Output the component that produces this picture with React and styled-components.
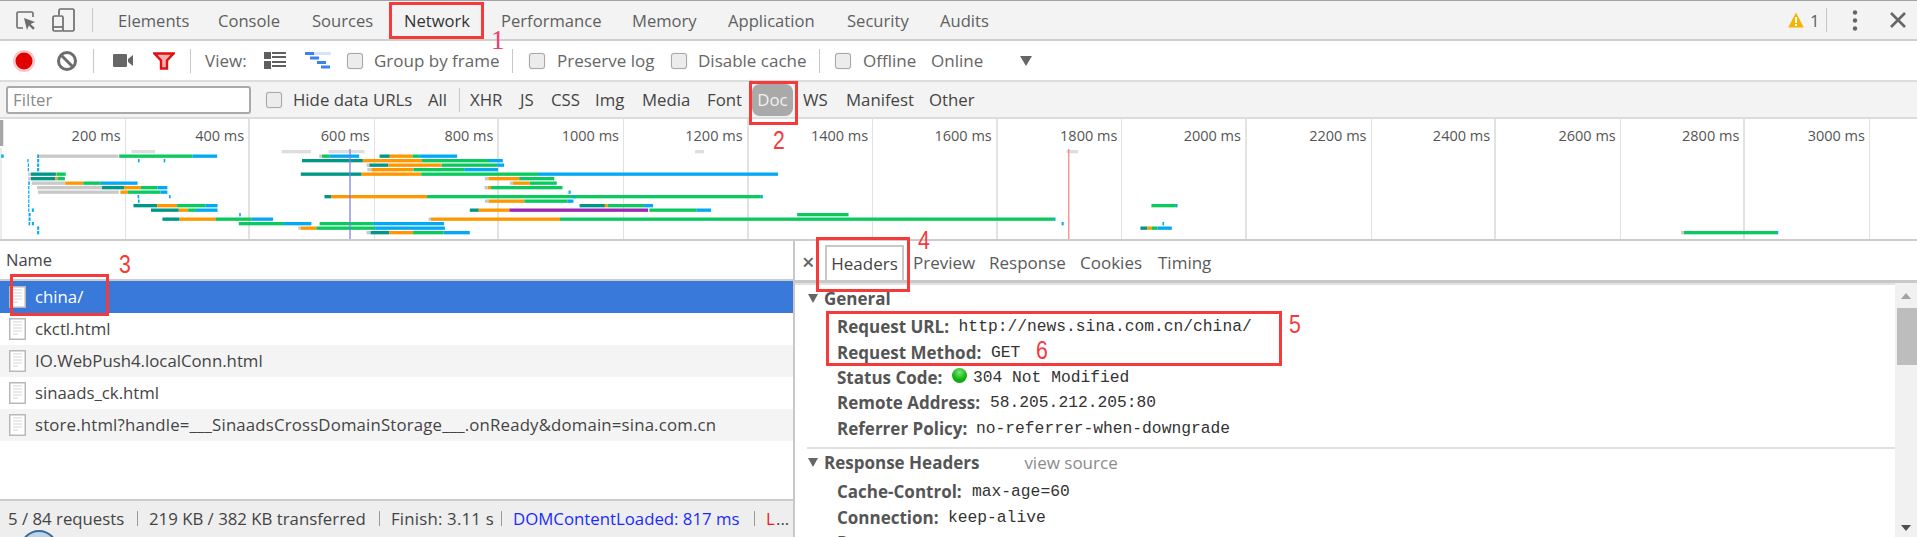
import React from 'react';
import styled, { createGlobalStyle } from 'styled-components';

const GlobalStyle = createGlobalStyle`
  html, body { margin: 0; padding: 0; background: #fff; }
  * { box-sizing: border-box; }
`;

const UI_FONT = `"Open Sans", "Noto Sans", sans-serif`;
const MONO_FONT = `"Liberation Mono", monospace`;

const Page = styled.div`
  position: relative;
  width: 1917px;
  height: 537px;
  overflow: hidden;
  display: flex;
  flex-direction: column;
  border-top: 1px solid #a3a3a3;
  font-family: ${UI_FONT};
  font-size: 17px;
  color: #5a5a5a;
`;

const Bar = styled.div`
  flex: none;
  display: flex;
  align-items: center;
  height: ${(p) => p.$h}px;
  padding-left: ${(p) => p.$pad || 0}px;
  font-size: ${(p) => p.$size || 17}px;
  color: ${(p) => p.$color || '#5f5f5f'};
  background: ${(p) => p.$bg || '#f3f3f3'};
  border-bottom: 2px solid ${(p) => p.$lineColor || '#dcdcdc'};
  white-space: nowrap;
`;

// every toolbar item gets the width up to the next item
const Slot = styled.div`
  flex: none;
  display: flex;
  align-items: center;
  width: ${(p) => p.$w}px;
  padding-left: ${(p) => p.$pad || 0}px;
  letter-spacing: ${(p) => p.$track || 0}px;
  color: ${(p) => p.$color || 'inherit'};
`;

const Spring = styled.div`
  flex: 1;
`;

const Divider = styled.div`
  flex: none;
  width: 1px;
  height: ${(p) => p.$h || 24}px;
  margin-right: ${(p) => p.$after || 0}px;
  background: #c8c8c8;
`;

const Check = styled.span`
  flex: none;
  width: 16px;
  height: 16px;
  border: 1px solid #a8a8a8;
  border-radius: 3px;
  background: #ececec;
  box-shadow: 0 0 1px #bbb;
  margin-right: ${(p) => p.$after}px;
`;

const FilterInput = styled.div`
  flex: none;
  width: 245px;
  height: 28px;
  margin-right: 15px;
  padding-left: 5px;
  border: 2px solid #a9a9a9;
  border-radius: 3px;
  background: #fff;
  color: #8a8a8a;
  line-height: 24px;
`;

const Pill = styled.div`
  flex: none;
  width: 41px;
  height: 32px;
  margin: 0 10px 0 -4px;
  border-radius: 8px;
  background: #a9a9a9;
  color: #f0f0f0;
  text-align: center;
  line-height: 32px;
`;

const Timeline = styled.div`
  position: relative;
  flex: none;
  display: flex;
  height: 122px;
  padding-left: 1px;
  border-bottom: 2px solid #cbcbcb;
`;

const Tick = styled.div`
  flex: none;
  width: 124.6px;
  height: 100%;
  padding: 6px 4px 0 0;
  border-right: ${(p) => (p.$thin ? 1 : 2)}px solid #e2e2e2;
  text-align: right;
  font-size: 14.5px;
  line-height: 22px;
  color: #555;
`;

const Waterfall = styled.svg`
  position: absolute;
  left: 0;
  top: 0;
  width: 1917px;
  height: 120px;
`;

const Split = styled.div`
  flex: 1;
  min-height: 0;
  display: flex;
`;

const ListPane = styled.div`
  flex: none;
  width: 795px;
  display: flex;
  flex-direction: column;
  border-right: 2px solid #c8c8c8;
`;

const NameHead = styled.div`
  flex: none;
  height: 40px;
  padding: 7px 0 0 6px;
  line-height: 24px;
  font-size: 16.5px;
  color: #444;
  border-bottom: 2px solid #cbcbcb;
`;

const Row = styled.div`
  flex: none;
  display: flex;
  align-items: center;
  height: 32px;
  padding-left: 9px;
  gap: 9px;
  font-size: 16.8px;
  letter-spacing: ${(p) => p.$track || 0}px;
  white-space: nowrap;
  color: ${(p) => (p.$selected ? '#fff' : '#444')};
  background: ${(p) => (p.$selected ? '#3879d9' : p.$odd ? '#f4f4f4' : '#fff')};
`;

const RowText = styled.span`
  margin-top: -2px;
`;

const StatusBar = styled.div`
  margin-top: auto;
  flex: none;
  display: flex;
  align-items: center;
  height: 38px;
  padding-left: 8px;
  padding-bottom: 2px;
  font-size: 16.8px;
  background: #eee;
  border-top: 2px solid #cbcbcb;
  white-space: nowrap;
  color: #444;
`;

const StatusSep = styled.span`
  flex: none;
  width: 1px;
  height: 15px;
  margin-right: 11px;
  background: #999;
`;

const DetailPane = styled.div`
  flex: 1;
  min-width: 0;
  display: flex;
  flex-direction: column;
`;

const DetailTabs = styled.div`
  flex: none;
  display: flex;
  align-items: center;
  height: 42px;
  border-bottom: 3px solid #c8c8c8;
  white-space: nowrap;
`;

const CloseX = styled.span`
  flex: none;
  width: 30px;
  padding-left: 7px;
  font-size: 22px;
  line-height: 24px;
  font-weight: 600;
  color: #666;
`;

const DetailTab = styled.div`
  flex: none;
  display: flex;
  align-items: center;
  width: ${(p) => p.$w}px;
  height: 35px;
  margin-top: 4px;
  ${(p) => p.$active && `
    justify-content: center;
    margin-right: 9px;
    border: 2px solid #c8c8c8;
    border-bottom: none;
    color: #444;
  `}
`;

const DetailBody = styled.div`
  flex: 1;
  min-height: 0;
  display: flex;
`;

const Sections = styled.div`
  flex: 1;
  overflow: hidden;
  border-top: 2px solid #e2e2e2;
`;

const SectionHead = styled.div`
  display: flex;
  align-items: center;
  height: 26px;
  padding-left: 13px;
  margin-bottom: ${(p) => p.$after}px;
  font-weight: 700;
  color: #555;
`;

const Arrow = styled.span`
  flex: none;
  width: 0;
  height: 0;
  margin-right: 6px;
  border-left: 5px solid transparent;
  border-right: 5px solid transparent;
  border-top: 9px solid #666;
`;

const ViewSource = styled.span`
  margin-left: 45px;
  font-weight: 400;
  color: #8b8b8b;
`;

const SectionRows = styled.div`
  padding-left: 42px;
  margin-bottom: ${(p) => p.$after || 0}px;
`;

const KV = styled.div`
  display: flex;
  align-items: center;
  height: 25.4px;
  white-space: nowrap;
`;

const Key = styled.span`
  flex: none;
  width: ${(p) => p.$w}px;
  font-weight: 700;
  color: #555;
`;

const Value = styled.span`
  font-family: ${MONO_FONT};
  font-size: 16.3px;
  color: #333;
`;

const GreenDot = styled.span`
  flex: none;
  width: 15px;
  height: 15px;
  margin: -4px 6px 0 0;
  border-radius: 50%;
  background: radial-gradient(circle at 50% 30%, #7be87b, #12b312 55%, #0c9a0c);
`;

const SectionLine = styled.div`
  height: 2px;
  margin: 0 0 1px 12px;
  background: #e0e0e0;
`;

const Scroller = styled.div`
  flex: none;
  width: 22px;
  position: relative;
  background: #f1f1f1;
`;

const ScrollArrow = styled.span`
  position: absolute;
  left: 6px;
  top: ${(p) => p.$top}px;
  width: 0;
  height: 0;
  border-left: 5.5px solid transparent;
  border-right: 5.5px solid transparent;
  ${(p) => (p.$down ? 'border-top: 6px solid #505050;' : 'border-bottom: 6px solid #a3a3a3;')}
`;

const ScrollThumb = styled.div`
  position: absolute;
  left: 2px;
  right: 0;
  top: 25px;
  height: 57px;
  background: #bdbdbd;
`;

const RedBox = styled.div`
  position: absolute;
  left: ${(p) => p.$x}px;
  top: ${(p) => p.$y}px;
  width: ${(p) => p.$w}px;
  height: ${(p) => p.$h}px;
  border: 3px solid #f63a3a;
  pointer-events: none;
`;

const Mark = styled.span`
  position: absolute;
  left: ${(p) => p.$x}px;
  top: ${(p) => p.$y}px;
  font-family: "Liberation Sans", sans-serif;
  font-size: 25px;
  line-height: 25px;
  color: #f63a3a;
  transform: scaleX(0.85);
  transform-origin: left center;
`;

const SerifMark = styled.span`
  position: absolute;
  left: 491px;
  top: 26px;
  font-family: "Liberation Serif", serif;
  font-size: 27px;
  line-height: 27px;
  color: #f0406e;
`;

const Blob = styled.div`
  position: absolute;
  left: 20px;
  top: 529px;
  width: 38px;
  height: 38px;
  border-radius: 50%;
  border: 2px solid #3c6a94;
  background: #bcd4ea;
`;

const InspectIcon = () => (
  <svg width="24" height="24" viewBox="0 0 24 24" fill="none" style={{ marginLeft: 14 }}>
    <path d="M9 20H4.5a1.5 1.5 0 0 1-1.5-1.5V5.5A1.5 1.5 0 0 1 4.5 4h13A1.5 1.5 0 0 1 19 5.5V9" stroke="#6d6d6d" strokeWidth="1.6" />
    <path d="M10 10l11 4-4.4 1.9 4.2 4.2-1.7 1.7-4.2-4.2L13 22z" fill="#6d6d6d" />
  </svg>
);

const DeviceIcon = () => (
  <svg width="26" height="26" viewBox="0 0 26 26" fill="none" stroke="#6d6d6d" strokeWidth="1.7">
    <path d="M8 8V3.5A1.5 1.5 0 0 1 9.5 2h12A1.5 1.5 0 0 1 23 3.5v19a1.5 1.5 0 0 1-1.5 1.5H12" />
    <path d="M3.5 9h7A1.5 1.5 0 0 1 12 10.5v12a1.5 1.5 0 0 1-1.5 1.5h-7A1.5 1.5 0 0 1 2 22.5v-12A1.5 1.5 0 0 1 3.5 9z" />
    <path d="M2 20h10" />
  </svg>
);

const RecordIcon = () => (
  <svg width="24" height="24" viewBox="0 0 24 24">
    <circle cx="12" cy="12" r="11" fill="#f9c9c9" />
    <circle cx="12" cy="12" r="8.5" fill="#e00000" />
  </svg>
);

const StopIcon = () => (
  <svg width="22" height="22" viewBox="0 0 22 22" fill="none" stroke="#6d6d6d" strokeWidth="3">
    <circle cx="11" cy="11" r="8.5" />
    <path d="M5 5l12 12" />
  </svg>
);

const CameraIcon = () => (
  <svg width="20" height="13" viewBox="0 0 20 13" fill="#666">
    <rect x="0" y="0" width="14" height="13" rx="1" />
    <path d="M15 5l5-4v11l-5-4z" />
  </svg>
);

const FunnelIcon = () => (
  <svg width="22" height="18" viewBox="0 0 22 18">
    <path d="M1.5 1.5h19L14 8.5V16.5H8V8.5z" fill="#f2b0b0" stroke="#e01010" strokeWidth="2.4" />
  </svg>
);

const ListIcon = () => (
  <svg width="22" height="17" viewBox="0 0 22 17" fill="#5f5f5f">
    <rect x="0" y="0" width="7" height="7" />
    <rect x="0" y="9" width="7" height="8" />
    <rect x="8" y="0" width="14" height="2" />
    <rect x="8" y="4" width="14" height="2" />
    <rect x="8" y="9" width="14" height="2" />
    <rect x="8" y="13" width="14" height="2" />
  </svg>
);

const GanttIcon = () => (
  <svg width="26" height="17" viewBox="0 0 26 17">
    <rect x="0" y="0" width="26" height="3" fill="#d5e4fb" />
    <rect x="0" y="0" width="9" height="3" fill="#3b82ee" />
    <rect x="5" y="4.5" width="9" height="3" fill="#3b82ee" />
    <rect x="12" y="9" width="9" height="3" fill="#3b82ee" />
    <rect x="16" y="13.5" width="9" height="3" fill="#3b82ee" />
  </svg>
);

const FileIcon = () => (
  <svg width="17" height="22" viewBox="0 0 17 22" style={{ flex: 'none' }}>
    <rect x="0.75" y="0.75" width="15.5" height="20.5" fill="#fff" stroke="#b8b8b8" strokeWidth="1.5" />
    <path d="M4 4h9M4 7h9M4 10h9M4 13h9M4 16h5" stroke="#e4e4e4" strokeWidth="1.5" />
  </svg>
);

const WarnIcon = () => (
  <svg width="16" height="16" viewBox="0 0 16 16">
    <path d="M8 0.5L15.8 15.5H0.2z" fill="#f4b400" />
    <rect x="7" y="5" width="2" height="6" fill="#fff" />
    <rect x="7" y="12" width="2" height="2" fill="#fff" />
  </svg>
);

const DotsIcon = () => (
  <svg width="6" height="21" viewBox="0 0 6 21" fill="#666">
    <circle cx="3" cy="2.5" r="2.2" />
    <circle cx="3" cy="10.5" r="2.2" />
    <circle cx="3" cy="18.5" r="2.2" />
  </svg>
);

const CloseIcon = () => (
  <svg width="16" height="16" viewBox="0 0 16 16" stroke="#666" strokeWidth="2.6">
    <path d="M1 1l14 14M15 1L1 15" />
  </svg>
);

const DropIcon = () => (
  <svg width="12" height="10" viewBox="0 0 12 10" fill="#666">
    <path d="M0 0h12L6 10z" />
  </svg>
);

const tabs = [
  ['Elements', 100], ['Console', 94], ['Sources', 92], ['Network', 97, '#333'], ['Performance', 131],
  ['Memory', 96], ['Application', 119], ['Security', 93], ['Audits', 60],
];

const typeFilters = [
  ['XHR', 50], ['JS', 31], ['CSS', 44], ['Img', 47], ['Media', 65], ['Font', 49],
];

const ticks = [200, 400, 600, 800, 1000, 1200, 1400, 1600, 1800, 2000, 2200, 2400, 2600, 2800, 3000];

const T = '#009688';
const O = '#ff9800';
const G = '#0ac95f';
const B = '#03a9f4';
const L = '#c9c9c9';
const P = '#9c27b0';
const Z = 1568; // second crop offset, bars are noted in 2.45 units per pixel
const Y = 3128.65;

// row index, then [from, to, colour] runs
const bars = [
  [0, [[322, 380, '#ddd'], [690, 762, '#ddd'], [805, 893, '#ddd'], [Z + 135, Z + 157, '#ddd'], [Z + 1045, Z + 1073, '#ddd']]],
  [1, [[3, 9, B], [91, 96, B], [96, 290, L], [292, 472, G], [472, 532, B], [782, 789, L], [789, 808, G], [808, 880, B], [930, 955, T], [955, 1011, O], [1011, 1027, G], [1027, 1120, B]]],
  [2, [[67, 70, B], [91, 96, B], [338, 342, B], [401, 405, B], [740, 889, T], [889, 1034, O], [1034, 1198, G], [1198, 1232, B]]],
  [3, [[68, 71, B], [91, 96, B], [898, 905, L], [905, 951, T], [951, 1082, O], [1082, 1218, G], [1218, 1235, B]]],
  [4, [[68, 71, B], [91, 96, B], [900, 910, L], [910, 1013, O], [1013, 1139, G], [1139, 1220, B]]],
  [5, [[69, 76, L], [76, 137, T], [137, 139, O], [139, 161, G], [737, 886, T], [886, 1032, O], [1032, 1318, G], [1318, Z + 338, B]]],
  [6, [[69, 76, L], [76, 136, T], [136, 141, O], [141, 159, G], [1188, 1197, L], [1197, 1272, O], [1272, 1358, G]]],
  [7, [[69, 73, B], [78, 160, L], [160, 204, O], [204, 247, G], [247, 337, B], [1249, 1257, L], [1257, 1298, O], [1298, 1364, G]]],
  [8, [[69, 72, B], [91, 250, L], [250, 304, T], [304, 345, O], [345, 386, G], [386, 410, B], [1187, 1195, L], [1195, 1203, O], [1203, 1378, G]]],
  [9, [[69, 72, B], [93, 291, L], [295, 313, O], [313, 393, G], [393, 410, B], [1393, 1398, B]]],
  [10, [[69, 72, B], [337, 341, B], [414, 418, B], [795, 811, T], [811, 1046, O], [1046, Z + 296, G], [Z + 296, Z + 301, B], [1405, 1410, B]]],
  [11, [[69, 72, B], [338, 342, B], [1188, 1197, L], [1197, 1285, O], [1285, 1390, G], [1390, 1405, B]]],
  [12, [[69, 72, B], [327, 385, T], [385, 434, O], [434, 503, G], [503, 533, B], [1420, 1482, T], [1482, 1489, O], [1489, Z + 10, G], [Z + 10, Z + 32, B], [Z + 1253, Z + 1313, G], [Z + 1313, Z + 1317, B]]],
  [13, [[69, 72, B], [78, 83, B], [370, 438, T], [438, 461, O], [461, 480, G], [480, 533, B], [1151, 1173, T], [1173, 1248, O], [1248, Z + 20, P], [Z + 23, Z + 139, G], [Z + 139, Z + 174, B]]],
  [14, [[70, 75, B], [586, 590, B], [Z + 385, Z + 511, G]]],
  [15, [[70, 75, B], [398, 440, T], [440, 529, O], [529, 617, G], [617, 669, B], [1050, 1056, L], [1056, 1372, O], [1372, Z + 1014, G], [Z + 1014, Z + 1018, B]]],
  [16, [[70, 74, B], [78, 83, B], [585, 696, G], [696, 763, B], [783, 914, G], [914, 1088, B], [Z + 1033, Z + 1038, B], [Z + 1280, Z + 1284, B]]],
  [17, [[91, 96, B], [731, 737, L], [737, 775, O], [775, 919, G], [919, 1090, B], [Z + 1226, Z + 1243, T], [Z + 1243, Z + 1254, O], [Z + 1254, Z + 1268, G], [Z + 1268, Z + 1303, B]]],
  [18, [[91, 96, B], [898, 908, L], [908, 954, T], [954, 1012, O], [1012, 1087, G], [1087, 1151, B], [Y + 990, Y + 997, L], [Y + 997, Y + 1225, G], [Y + 1225, Y + 1228, B]]],
];

const files = [
  ['china/'],
  ['ckctl.html'],
  ['IO.WebPush4.localConn.html'],
  ['sinaads_ck.html'],
  ['store.html?handle=___SinaadsCrossDomainStorage___.onReady&domain=sina.com.cn', 0.17],
];

export default function App() {
  return (
    <>
      <GlobalStyle />
      <Page>
        <Bar $h={40} $size={16.6} $lineColor="#cfcfcf">
          <Slot $w={51}><InspectIcon /></Slot>
          <Slot $w={41}><DeviceIcon /></Slot>
          <Divider $after={25} />
          {tabs.map(([name, w, color]) => <Slot key={name} $w={w} $color={color}>{name}</Slot>)}
          <Spring />
          <WarnIcon />
          <Slot $w={22} $pad={6}>1</Slot>
          <Divider $after={25} />
          <Slot $w={38}><DotsIcon /></Slot>
          <Slot $w={27}><CloseIcon /></Slot>
        </Bar>

        <Bar $h={41} $bg="#fff" $color="#666">
          <Slot $w={56} $pad={12}><RecordIcon /></Slot>
          <Slot $w={37}><StopIcon /></Slot>
          <Divider $after={19} />
          <Slot $w={40}><CameraIcon /></Slot>
          <Slot $w={37}><FunnelIcon /></Slot>
          <Divider $after={14} />
          <Slot $w={59}>View:</Slot>
          <Slot $w={41}><ListIcon /></Slot>
          <Slot $w={42}><GanttIcon /></Slot>
          <Check $after={11} />
          <Slot $w={138}>Group by frame</Slot>
          <Divider $after={16} />
          <Check $after={12} />
          <Slot $w={114}>Preserve log</Slot>
          <Check $after={11} />
          <Slot $w={121}>Disable cache</Slot>
          <Divider $after={15} />
          <Check $after={12} />
          <Slot $w={68}>Offline</Slot>
          <Slot $w={89}>Online</Slot>
          <DropIcon />
        </Bar>

        <Bar $h={37} $pad={6} $size={16.8} $color="#444">
          <FilterInput>Filter</FilterInput>
          <Check $after={11} />
          <Slot $w={135}>Hide data URLs</Slot>
          <Slot $w={31}>All</Slot>
          <Divider $after={10} />
          {typeFilters.map(([name, w]) => <Slot key={name} $w={w}>{name}</Slot>)}
          <Pill>Doc</Pill>
          <Slot $w={43}>WS</Slot>
          <Slot $w={83}>Manifest</Slot>
          <Slot $w={50}>Other</Slot>
        </Bar>

        <Timeline>
          {ticks.map((t) => <Tick key={t} $thin={t % 400 !== 0}>{t} ms</Tick>)}
          <Waterfall viewBox="0 12 4696.65 360" preserveAspectRatio="none">
            <rect x="0" y="15" width="8" height="78" fill="#a6a6a6" />
            <rect x="0" y="99" width="5" height="273" fill="#ececec" />
            {bars.flatMap(([row, runs]) =>
              runs.map(([from, to, color], i) => (
                <rect key={`${row}-${i}`} x={from} y={105 + row * 13.5} width={to - from} height="10" fill={color} />
              ))
            )}
            <rect x="856" y="102" width="3" height="270" fill="#7b7bee" />
            <rect x={Z + 1049} y="102" width="3" height="270" fill="#f58484" />
          </Waterfall>
        </Timeline>

        <Split>
          <ListPane>
            <NameHead>Name</NameHead>
            {files.map(([f, track], i) => (
              <Row key={f} $selected={i === 0} $odd={i % 2 === 0} $track={track}>
                <FileIcon />
                <RowText>{f}</RowText>
              </Row>
            ))}
            <StatusBar>
              <Slot $w={129}>5 / 84 requests</Slot>
              <StatusSep />
              <Slot $w={230}>219 KB / 382 KB transferred</Slot>
              <StatusSep />
              <Slot $w={110} $track={0.2}>Finish: 3.11 s</Slot>
              <StatusSep />
              <Slot $w={241} $color="#1a2bff">DOMContentLoaded: 817 ms</Slot>
              <StatusSep />
              <Slot $w={10} $color="#f01818">L</Slot>
              ...
            </StatusBar>
          </ListPane>

          <DetailPane>
            <DetailTabs>
              <CloseX>×</CloseX>
              <DetailTab $active $w={79}>Headers</DetailTab>
              <DetailTab $w={76}>Preview</DetailTab>
              <DetailTab $w={91}>Response</DetailTab>
              <DetailTab $w={78}>Cookies</DetailTab>
              <DetailTab $w={60}>Timing</DetailTab>
            </DetailTabs>
            <DetailBody>
              <Sections>
                <SectionHead $after={3}><Arrow />General</SectionHead>
                <SectionRows $after={6}>
                  <KV><Key $w={121.6}>Request URL:</Key><Value>http://news.sina.com.cn/china/</Value></KV>
                  <KV><Key $w={154}>Request Method:</Key><Value>GET</Value></KV>
                  <KV><Key $w={115}>Status Code:</Key><GreenDot /><Value>304 Not Modified</Value></KV>
                  <KV><Key $w={153}>Remote Address:</Key><Value>58.205.212.205:80</Value></KV>
                  <KV><Key $w={139}>Referrer Policy:</Key><Value>no-referrer-when-downgrade</Value></KV>
                </SectionRows>
                <SectionLine />
                <SectionHead $after={3}><Arrow />Response Headers<ViewSource>view source</ViewSource></SectionHead>
                <SectionRows>
                  <KV><Key $w={135}>Cache-Control:</Key><Value>max-age=60</Value></KV>
                  <KV><Key $w={111}>Connection:</Key><Value>keep-alive</Value></KV>
                  <KV><Key $w={50}>Date:</Key></KV>
                </SectionRows>
              </Sections>
              <Scroller>
                <ScrollArrow $top={10} />
                <ScrollThumb />
                <ScrollArrow $down $top={242} />
              </Scroller>
            </DetailBody>
          </DetailPane>
        </Split>

        <Blob />
        <RedBox $x={389} $y={1} $w={95} $h={37} />
        <SerifMark>1</SerifMark>
        <RedBox $x={749} $y={80} $w={49} $h={44} />
        <Mark $x={773} $y={127}>2</Mark>
        <RedBox $x={10} $y={273} $w={99} $h={42} />
        <Mark $x={119} $y={251}>3</Mark>
        <RedBox $x={816} $y={236} $w={94} $h={55} />
        <Mark $x={918} $y={227}>4</Mark>
        <RedBox $x={826} $y={310} $w={456} $h={55} />
        <Mark $x={1289} $y={311}>5</Mark>
        <Mark $x={1036} $y={337}>6</Mark>
      </Page>
    </>
  );
}
